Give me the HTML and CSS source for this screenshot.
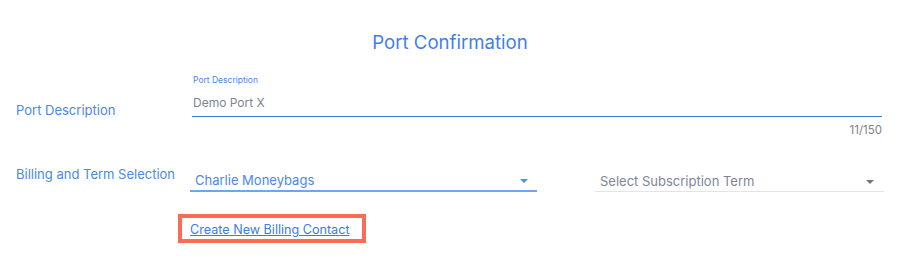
FILE: index.html
```html
<!DOCTYPE html>
<html lang="en">
<head>
<meta charset="utf-8">
<title>Port Confirmation</title>
<link rel="stylesheet" href="styles.css">
</head>
<body>
<main class="page">
  <h1 class="title">Port Confirmation</h1>

  <section class="row row-desc">
    <div class="row-label desc-label">Port Description</div>
    <div class="field">
      <label class="float-label">Port Description</label>
      <div class="input">Demo Port X</div>
      <div class="counter">11/150</div>
    </div>
  </section>

  <section class="row row-billing">
    <div class="row-label billing-label">Billing and Term Selection</div>
    <div class="selects">
      <div class="select select-active">
        <span class="select-value">Charlie Moneybags</span>
        <span class="arrow"></span>
      </div>
      <div class="select select-term">
        <span class="select-placeholder">Select Subscription Term</span>
        <span class="arrow arrow-grey"></span>
      </div>
    </div>
  </section>

  <section class="row row-link">
    <div class="row-label"></div>
    <div class="link-box"><a class="create-link" href="#">Create New Billing Contact</a></div>
  </section>
</main>
</body>
</html>
```

FILE: styles.css
```css
html, body {
  margin: 0;
  padding: 0;
  background: #ffffff;
}

body {
  font-family: "Inter", "Noto Sans", "Liberation Sans", sans-serif;
  color: #4285f4;
}

.page {
  width: 868px;
  padding: 30px 24px 0 16px;
}

.title {
  margin: 0;
  font-size: 18.6px;
  line-height: 24px;
  font-weight: 400;
  text-align: center;
  color: #3f7fe6;
}

.row {
  display: grid;
  grid-template-columns: 174px 1fr;
}

.row-label {
  font-size: 13px;
  line-height: 16px;
  color: #4a88ec;
}

.row-desc {
  margin-top: 21px;
}

.desc-label {
  margin-top: 27px;
}

.field {
  padding: 0 2px 0 2px;
  display: flex;
  flex-direction: column;
}

.float-label {
  font-size: 8.5px;
  line-height: 11px;
  color: #4a88ec;
  padding-left: 1px;
}

.input {
  margin-top: 9px;
  font-size: 12px;
  line-height: 16px;
  color: #7d8590;
  padding: 0 0 5px 1px;
  border-bottom: 1px solid #3a78d8;
}

.counter {
  margin-top: 6px;
  align-self: flex-end;
  font-size: 11.5px;
  line-height: 14px;
  color: #7d838c;
}

.row-billing {
  margin-top: 29px;
}

.selects {
  display: grid;
  grid-template-columns: 347px 289px;
  column-gap: 58px;
}

.select {
  display: flex;
  align-items: center;
  justify-content: space-between;
  height: 20px;
  margin-top: 4px;
  font-size: 13px;
}

.select-active {
  padding: 0 9px 0 5px;
  border-bottom: 2px solid #6ea4f2;
  color: #4a88ec;
}

.select-term {
  padding: 0 10px 0 5px;
  border-bottom: 1px solid #e2e4e8;
  color: #7d8696;
  margin-top: 5px;
}

.arrow {
  width: 0;
  height: 0;
  border-left: 4px solid transparent;
  border-right: 4px solid transparent;
  border-top: 4px solid #4f8ff0;
  margin-top: 2px;
}

.arrow-grey {
  border-top-color: #6f7680;
}

.row-link {
  margin-top: 22px;
}

.link-box {
  justify-self: start;
  margin-left: -12px;
  border: 4px solid #ff6a55;
  padding: 0 12px 0 8px;
}

.create-link {
  font-size: 12.6px;
  line-height: 19px;
  color: #3a7ce6;
  text-decoration: underline;
}
```
